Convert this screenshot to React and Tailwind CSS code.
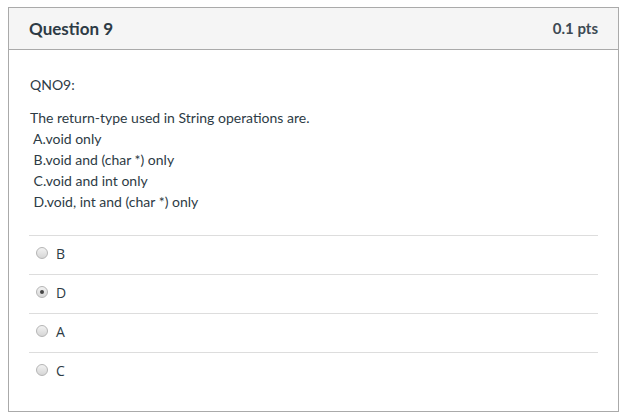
import React from "react";

const answers = [
  { label: "B", checked: false },
  { label: "D", checked: true },
  { label: "A", checked: false },
  { label: "C", checked: false },
];

const Radio = ({ checked }) => (
  <span className="relative inline-block w-[12px] h-[12px] rounded-full border border-[#b5b5b5] bg-gradient-to-b from-[#f2f2f2] to-[#d6d6d6]">
    {checked && (
      <span className="absolute left-[3px] top-[3px] w-[4px] h-[4px] rounded-full bg-[#444]" />
    )}
  </span>
);

const App = () => {
  return (
    <div className="w-[624px] h-[416px] bg-white pt-[7px] pl-[8px]" style={{ fontFamily: "Lato, 'Open Sans', sans-serif" }}>
      <div className="w-[611px] h-[405px] border border-[#aaaaaa] text-[#2d3b45]">
        <div className="h-[42px] bg-[#f5f5f5] border-b border-[#aaaaaa] flex items-center justify-between px-5">
          <h2 className="text-[17px] font-bold">Question 9</h2>
          <span className="text-[15px] font-bold text-[#3d4a53]">0.1 pts</span>
        </div>
        <div className="px-5 pt-[24px]">
          <div className="pl-px text-[14px] leading-[21px]">
            <p>QNO9:</p>
            <p className="mt-[12px]">The return-type used in String operations are.</p>
            <p>&nbsp;A.void only</p>
            <p>&nbsp;B.void and (char *) only</p>
            <p>&nbsp;C.void and int only</p>
            <p>&nbsp;D.void, int and (char *) only</p>
          </div>
          <div className="mt-[23px]">
            {answers.map((a) => (
              <div
                key={a.label}
                className="h-[39px] border-t border-[#dddddd] flex items-center pl-[7px] pb-[4px] text-[14px]"
              >
                <Radio checked={a.checked} />
                <span className="ml-[8px] text-[#2d3b45]" style={{ fontFamily: "'Open Sans', Lato, sans-serif" }}>{a.label}</span>
              </div>
            ))}
          </div>
        </div>
      </div>
    </div>
  );
};

export default App;
